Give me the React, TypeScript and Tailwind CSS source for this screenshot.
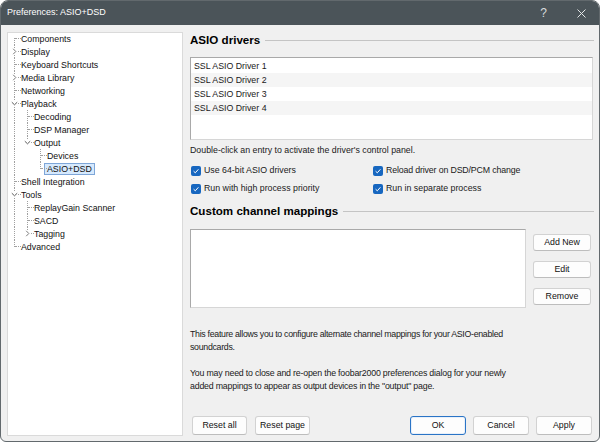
import React from "react";

type Row = {
  label: string;
  level: number;
  guides: boolean[];
  first?: boolean;
  last?: boolean;
  exp?: "open" | "closed";
  sel?: boolean;
};

const rows: Row[] = [
  { label: "Components", level: 0, guides: [], first: true },
  { label: "Display", level: 0, guides: [], exp: "closed" },
  { label: "Keyboard Shortcuts", level: 0, guides: [] },
  { label: "Media Library", level: 0, guides: [], exp: "closed" },
  { label: "Networking", level: 0, guides: [] },
  { label: "Playback", level: 0, guides: [], exp: "open" },
  { label: "Decoding", level: 1, guides: [true] },
  { label: "DSP Manager", level: 1, guides: [true] },
  { label: "Output", level: 1, guides: [true], last: true, exp: "open" },
  { label: "Devices", level: 2, guides: [true, false] },
  { label: "ASIO+DSD", level: 2, guides: [true, false], last: true, sel: true },
  { label: "Shell Integration", level: 0, guides: [] },
  { label: "Tools", level: 0, guides: [], exp: "open" },
  { label: "ReplayGain Scanner", level: 1, guides: [true] },
  { label: "SACD", level: 1, guides: [true] },
  { label: "Tagging", level: 1, guides: [true], last: true, exp: "closed" },
  { label: "Advanced", level: 0, guides: [], last: true },
];

const font = { fontFamily: '"Liberation Sans", Arial, sans-serif' };

function GuideCell({ full }: { full: boolean }) {
  return (
    <div className="relative w-[13px] h-[13px] shrink-0">
      {full && <div className="absolute left-[6px] top-0 h-[13px] border-l border-dotted border-[#a0a0a0]" />}
    </div>
  );
}

function OwnCell({ row }: { row: Row }) {
  const vClass = row.first
    ? "top-[6px] h-[7px]"
    : row.last
    ? "top-0 h-[7px]"
    : "top-0 h-[13px]";
  return (
    <div className="relative w-[13px] h-[13px] shrink-0">
      <div className={`absolute left-[6px] border-l border-dotted border-[#a0a0a0] ${vClass}`} />
      <div className="absolute left-[7px] top-[6px] w-[6px] border-t border-dotted border-[#a0a0a0]" />
      {row.exp === "closed" && (
        <svg className="absolute left-[4px] top-[3px] bg-white" width="5" height="7" viewBox="0 0 5 7">
          <path d="M1.2 0.8 L3.8 3.5 L1.2 6.2" fill="none" stroke="#7a7a7a" strokeWidth="1" />
        </svg>
      )}
      {row.exp === "open" && (
        <svg className="absolute left-[3px] top-[4px] bg-white" width="7" height="5" viewBox="0 0 7 5">
          <path d="M0.8 1.2 L3.5 3.8 L6.2 1.2" fill="none" stroke="#5a5a5a" strokeWidth="1" />
        </svg>
      )}
    </div>
  );
}

function Tree() {
  return (
    <div className="ml-[6px] mt-[7px] w-[176px] h-[404px] bg-white border border-[#dadada] text-[8.8px] text-[#111]">
      <div className="-mt-[1px]">
        {rows.map((r) => (
          <div key={r.label} className="flex items-center h-[13px]">
            {r.guides.map((g, i) => (
              <GuideCell key={i} full={g} />
            ))}
            <OwnCell row={r} />
            <span
              className={`-ml-[3px] px-[2px] h-[12px] leading-[10px] border whitespace-nowrap ${
                r.sel ? "bg-[#d6e9fd] border-[#7ea6d8]" : "border-transparent bg-white"
              }`}
            >
              {r.label}
            </span>
          </div>
        ))}
      </div>
    </div>
  );
}

function Heading({ text }: { text: string }) {
  return (
    <div className="flex items-center h-[16px]">
      <span className="text-[11.6px] font-bold text-black whitespace-nowrap">{text}</span>
      <div className="flex-1 h-px bg-[#c4c4c4] ml-[5px]" />
    </div>
  );
}

function Check({ label, tight }: { label: string; tight?: boolean }) {
  return (
    <div className="flex items-center h-[13px] gap-[3px]">
      <div className="w-[10px] h-[10px] rounded-[2px] bg-[#1767c0] flex items-center justify-center">
        <svg width="8" height="8" viewBox="0 0 8 8">
          <path d="M1.6 4.2 L3.3 5.8 L6.4 2.3" fill="none" stroke="white" strokeWidth="1" />
        </svg>
      </div>
      <span className={`whitespace-nowrap ${tight ? "tracking-[-0.15px]" : ""}`}>{label}</span>
    </div>
  );
}

function Btn({ label, w, primary }: { label: string; w: string; primary?: boolean }) {
  return (
    <div
      className={`${w} flex items-center justify-center rounded-[3px] border bg-[#fdfdfd] text-[8.8px] text-[#111] ${
        primary ? "border-[#2a74c6] shadow-[inset_0_0_0_1px_#e8f0fa]" : "border-[#d2d2d2] border-b-[#bdbdbd]"
      }`}
    >
      {label}
    </div>
  );
}

export default function App() {
  return (
    <div className="w-[600px] h-[443px] bg-white" style={font}>
      <div className="w-[600px] h-[442px] rounded-t-[8px] rounded-b-[6px] border border-[#62696d] bg-[#f0f0f0] overflow-hidden flex flex-col">
        <div className="h-[24px] bg-[#4b5459] flex items-center shrink-0">
          <span className="ml-[6px] text-[9px] text-white">Preferences: ASIO+DSD</span>
          <span className="ml-auto text-[12px] text-[#d8dcde] mr-[30px]">?</span>
          <svg className="mr-[13px]" width="9" height="9" viewBox="0 0 9 9">
            <path d="M0.5 0.5 L8.5 8.5 M8.5 0.5 L0.5 8.5" stroke="#e4e6e7" strokeWidth="1" />
          </svg>
        </div>
        <div className="flex flex-1">
          <Tree />
          <div className="ml-[7px] w-[404px] pt-[7px] flex flex-col text-[8.8px] text-[#1a1a1a]">
            <Heading text="ASIO drivers" />
            <div className="mt-[9px] h-[83px] w-[403px] bg-white border border-[#d6d6d6] border-t-[#a9a9a9] border-l-[#a9a9a9] pt-[0.5px]">
              {["SSL ASIO Driver 1", "SSL ASIO Driver 2", "SSL ASIO Driver 3", "SSL ASIO Driver 4"].map((d, i) => (
                <div
                  key={d}
                  className={`h-[14px] leading-[14px] pl-[3px] ${i % 2 === 1 ? "bg-[#f5f5f5]" : "bg-white"}`}
                >
                  {d}
                </div>
              ))}
            </div>
            <div className="mt-[4px] leading-[13px]">Double-click an entry to activate the driver's control panel.</div>
            <div className="mt-[7px] ml-[1px] grid grid-cols-[182px_1fr] gap-y-[5px]">
              <Check label="Use 64-bit ASIO drivers" />
              <Check label="Reload driver on DSD/PCM change" tight />
              <Check label="Run with high process priority" />
              <Check label="Run in separate process" />
            </div>
            <div className="mt-[8px]">
              <Heading text="Custom channel mappings" />
            </div>
            <div className="mt-[10px] flex">
              <div className="w-[336px] h-[79px] bg-white border border-[#d6d6d6] border-t-[#a9a9a9] border-l-[#a9a9a9]" />
              <div className="ml-[7px] pt-[5px] flex flex-col gap-[10px]">
                <div className="h-[17px] flex"><Btn label="Add New" w="w-[58px]" /></div>
                <div className="h-[17px] flex"><Btn label="Edit" w="w-[58px]" /></div>
                <div className="h-[17px] flex"><Btn label="Remove" w="w-[58px]" /></div>
              </div>
            </div>
            <div className="mt-[20px] leading-[13px] whitespace-nowrap tracking-[-0.3px]">
              This feature allows you to configure alternate channel mappings for your ASIO-enabled
              <br />
              soundcards.
            </div>
            <div className="mt-[13px] leading-[13px] whitespace-nowrap tracking-[-0.2px]">
              You may need to close and re-open the foobar2000 preferences dialog for your newly
              <br />
              added mappings to appear as output devices in the "output" page.
            </div>
            <div className="mt-[23px] h-[19px] flex pl-[2px] pr-[2px]">
              <div className="flex gap-[8px]">
                <Btn label="Reset all" w="w-[55px]" />
                <Btn label="Reset page" w="w-[55px]" />
              </div>
              <div className="ml-auto flex gap-[7px]">
                <Btn label="OK" w="w-[56px]" primary />
                <Btn label="Cancel" w="w-[56px]" />
                <Btn label="Apply" w="w-[56px]" />
              </div>
            </div>
          </div>
        </div>
      </div>
    </div>
  );
}
